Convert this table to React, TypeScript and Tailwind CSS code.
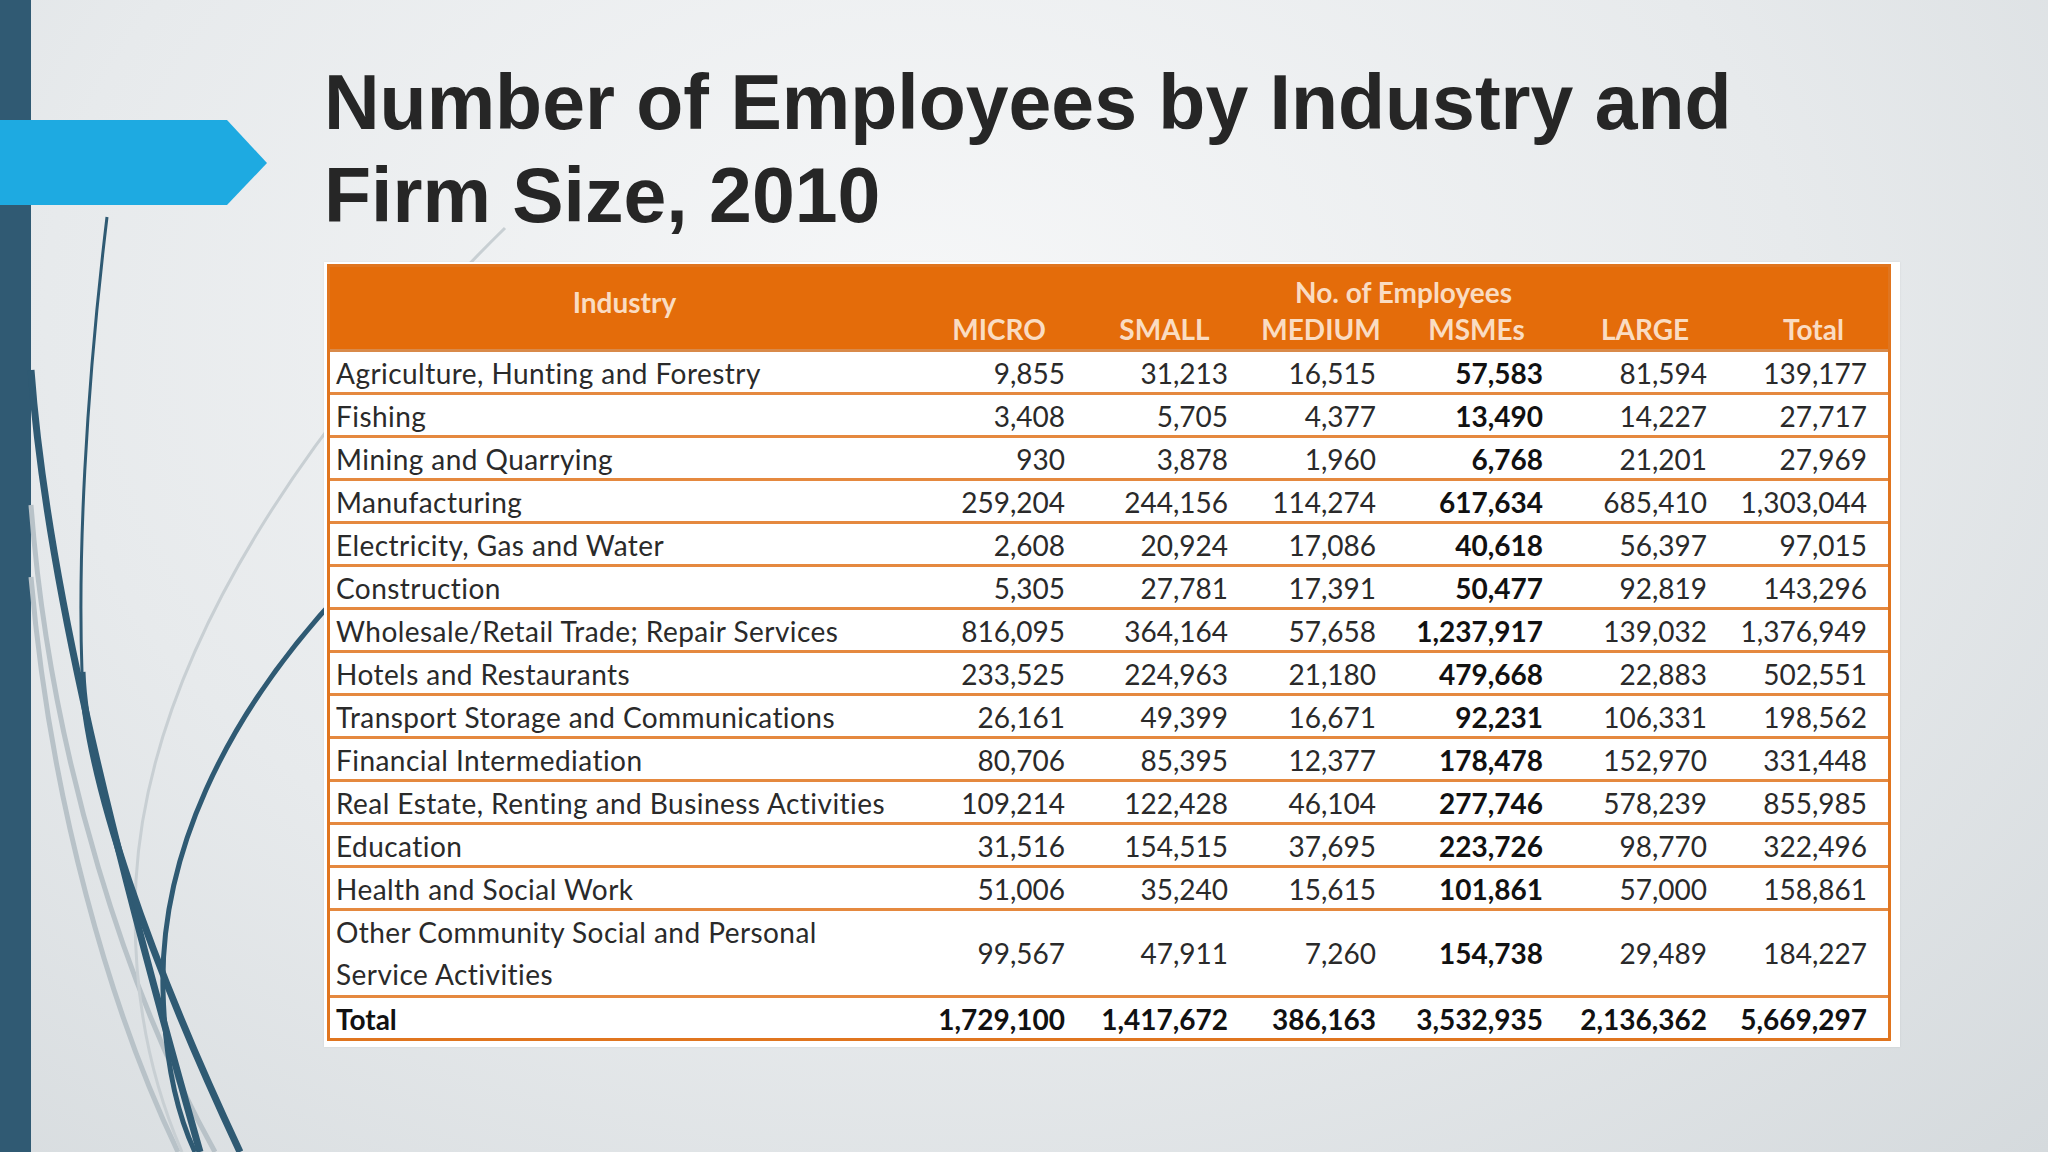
const rows: string[][] = [
  ["Agriculture, Hunting and Forestry", "9,855", "31,213", "16,515", "57,583", "81,594", "139,177"],
  ["Fishing", "3,408", "5,705", "4,377", "13,490", "14,227", "27,717"],
  ["Mining and Quarrying", "930", "3,878", "1,960", "6,768", "21,201", "27,969"],
  ["Manufacturing", "259,204", "244,156", "114,274", "617,634", "685,410", "1,303,044"],
  ["Electricity, Gas and Water", "2,608", "20,924", "17,086", "40,618", "56,397", "97,015"],
  ["Construction", "5,305", "27,781", "17,391", "50,477", "92,819", "143,296"],
  ["Wholesale/Retail Trade; Repair Services", "816,095", "364,164", "57,658", "1,237,917", "139,032", "1,376,949"],
  ["Hotels and Restaurants", "233,525", "224,963", "21,180", "479,668", "22,883", "502,551"],
  ["Transport Storage and Communications", "26,161", "49,399", "16,671", "92,231", "106,331", "198,562"],
  ["Financial Intermediation", "80,706", "85,395", "12,377", "178,478", "152,970", "331,448"],
  ["Real Estate, Renting and Business Activities", "109,214", "122,428", "46,104", "277,746", "578,239", "855,985"],
  ["Education", "31,516", "154,515", "37,695", "223,726", "98,770", "322,496"],
  ["Health and Social Work", "51,006", "35,240", "15,615", "101,861", "57,000", "158,861"],
];

const other = ["99,567", "47,911", "7,260", "154,738", "29,489", "184,227"];
const totals = ["1,729,100", "1,417,672", "386,163", "3,532,935", "2,136,362", "5,669,297"];

const cols = "grid grid-cols-[589px_160px_163px_148px_167px_164px_167px]";
const cellFont = { fontFamily: "Lato, 'Liberation Sans', sans-serif" };

function NumCells({ values, bold }: { values: string[]; bold?: boolean }) {
  return (
    <>
      {values.map((v, i) => (
        <div
          key={i}
          className={
            "flex items-center justify-end " +
            (i === 5 ? "pr-[21px] " : "pr-[14px] ") +
            (bold || i === 3 ? "font-bold text-[#111]" : "")
          }
        >
          {v}
        </div>
      ))}
    </>
  );
}

function Curves() {
  return (
    <svg className="absolute inset-0 pointer-events-none" width="2048" height="1152" viewBox="0 0 2048 1152" fill="none">
      <path d="M31,505 C50,760 130,1000 215,1152" stroke="#b8c2c8" strokeWidth="5" />
      <path d="M31,577 C50,800 110,1010 178,1152" stroke="#b8c2c8" strokeWidth="5" />
      <path d="M505,228 C330,400 150,640 136,880 C130,1000 155,1090 182,1152" stroke="#c8cfd3" strokeWidth="3" />
      <path d="M31,370 C45,560 100,800 200,1152" stroke="#2f5a73" strokeWidth="7" />
      <path d="M107,217 C85,400 78,560 82,672" stroke="#2f5a73" strokeWidth="3" />
      <path d="M82,672 C86,780 150,960 240,1152" stroke="#2f5a73" strokeWidth="7" />
      <path d="M345,588 C220,720 160,860 163,990 C165,1070 180,1120 195,1152" stroke="#2f5a73" strokeWidth="5" />
    </svg>
  );
}

export default function App() {
  return (
    <div className="relative w-[2048px] h-[1152px] overflow-hidden flex bg-[radial-gradient(ellipse_at_45%_28%,#f6f7f8_0%,#e7eaec_55%,#d5dadd_100%)]">
      <Curves />
      <div className="w-[31px] h-full shrink-0 bg-[#305a73]" />
      <svg className="absolute left-0 top-[120px]" width="268" height="86" viewBox="0 0 268 86">
        <polygon points="0,0 227,0 267,43 227,85 0,85" fill="#1eaae1" />
      </svg>

      <div className="relative flex flex-col pl-[293px] pt-[56px]">
        <h1
          className="text-[77px] leading-[93px] font-bold text-[#262626]"
          style={{ fontFamily: "'Liberation Sans', Arial, sans-serif" }}
        >
          Number of Employees by Industry and
          <br />
          Firm Size, 2010
        </h1>

        <div className="mt-[20px] w-[1576px] bg-white pl-[3px] pt-[2px] pr-[9px] pb-[6px] shadow-[0_0_2px_rgba(0,0,0,0.08)]">
          <div className="border-[3px] border-[#e0751f] text-[28px] text-[#2a2a2a]" style={cellFont}>
            <div className="flex h-[85px] bg-[#e46c0a] border-b-[3px] border-[#d98a4a] text-[#fadcc2] font-bold text-[28px]">
              <div className="w-[589px] flex items-center justify-center pb-[12px]">Industry</div>
              <div className="flex-1 flex flex-col pt-[10px]">
                <div className="h-[31px] leading-[31px] text-center">No. of Employees</div>
                <div className="mt-[6px] h-[31px] leading-[31px] grid grid-cols-[160px_163px_148px_167px_164px_167px] text-center">
                  <div>MICRO</div>
                  <div className="pl-[8px]">SMALL</div>
                  <div className="pl-[10px]">MEDIUM</div>
                  <div className="pl-[6px]">MSMEs</div>
                  <div className="pl-[12px]">LARGE</div>
                  <div className="pl-[18px]">Total</div>
                </div>
              </div>
            </div>

            {rows.map((r) => (
              <div key={r[0]} className={cols + " h-[43px] border-b-[3px] border-[#e5893f] bg-white"}>
                <div className="flex items-center pl-[6px] whitespace-nowrap tracking-[0.45px]">{r[0]}</div>
                <NumCells values={r.slice(1)} />
              </div>
            ))}

            <div className={cols + " h-[87px] border-b-[3px] border-[#e5893f] bg-white"}>
              <div className="flex flex-col justify-center pl-[6px] leading-[42px] tracking-[0.45px]">
                <span>Other Community Social and Personal</span>
                <span>Service Activities</span>
              </div>
              <NumCells values={other} />
            </div>

            <div className={cols + " h-[40px] bg-white"}>
              <div className="flex items-center pl-[6px] font-bold text-[#111]">Total</div>
              <NumCells values={totals} bold />
            </div>
          </div>
        </div>
      </div>
    </div>
  );
}
